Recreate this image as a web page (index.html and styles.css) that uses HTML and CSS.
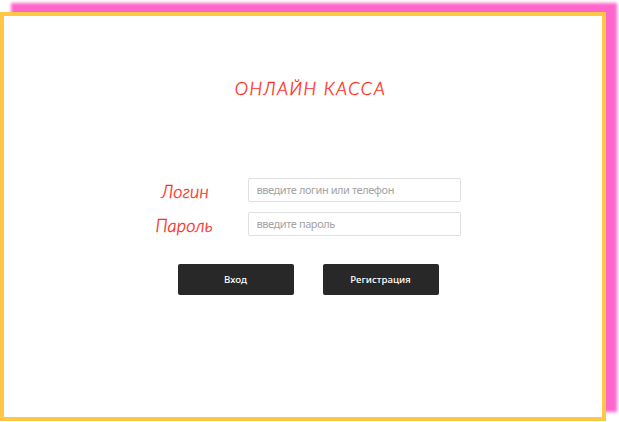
FILE: index.html
```html
<!DOCTYPE html>
<html lang="ru">
<head>
<meta charset="utf-8">
<title>Онлайн касса</title>
<link rel="stylesheet" href="styles.css">
</head>
<body>
<main class="panel">
  <h1 class="title"><span>ОНЛАЙН КАССА</span></h1>
  <form class="form">
    <div class="row">
      <label class="label label-login" for="login"><span>Логин</span></label>
      <input class="field" id="login" type="text" placeholder="введите логин или телефон">
    </div>
    <div class="row">
      <label class="label label-password" for="password"><span>Пароль</span></label>
      <input class="field" id="password" type="password" placeholder="введите пароль">
    </div>
    <div class="actions">
      <button class="button" type="button">Вход</button>
      <button class="button" type="button">Регистрация</button>
    </div>
  </form>
</main>
</body>
</html>
```
FILE: styles.css
```css
* { box-sizing: border-box; }

body {
  display: flow-root;
  margin: 0;
  height: 422px;
  overflow: hidden;
  background: #fff;
  font-family: "Open Sans", "Noto Sans", sans-serif;
}

.panel {
  width: 606px;
  height: 409px;
  margin-top: 12px;
  border: 4px solid #ffc844;
  background: #fff;
  box-shadow: 11px -9px 3px #ff66cc;
  display: flex;
  flex-direction: column;
  align-items: center;
}

.title,
.label {
  font-family: "Segoe Print", Lato, "Open Sans", sans-serif;
  font-style: italic;
  font-weight: 300;
  color: #ff2a18;
  -webkit-text-stroke: 0.35px #ff2a18;
}

.title {
  margin: 60px 0 0 15px;
  font-size: 18px;
  line-height: 24px;
  letter-spacing: 1.5px;
  white-space: nowrap;
}

.form {
  width: 310px;
  margin: 78px 0 0 13px;
}

.row {
  display: flex;
  align-items: center;
  height: 24px;
  margin-bottom: 10px;
}

.label {
  width: 93px;
  flex: none;
  padding-top: 2px;
  font-size: 18px;
  line-height: 24px;
  letter-spacing: 0.2px;
}

.label-login { padding-left: 7px; }
.label-password { padding-left: 1px; }

.field {
  width: 213px;
  height: 24px;
  margin: 0;
  padding: 0 8px 1px;
  border: 1px solid #e0e0e0;
  border-radius: 2px;
  background: #fff;
  font: 11px "Noto Sans", "Open Sans", sans-serif;
  letter-spacing: -0.42px;
  color: #333;
}

.field::placeholder { color: #a4a4a4; opacity: 1; }

.actions {
  display: flex;
  gap: 29px;
  margin: 28px 0 0 23px;
}

.button {
  width: 116px;
  height: 31px;
  flex: none;
  padding: 0;
  border: 0;
  border-radius: 2px;
  background: #282828;
  color: #fff;
  font: 500 9.7px "Noto Sans", "Open Sans", sans-serif;
}
```
